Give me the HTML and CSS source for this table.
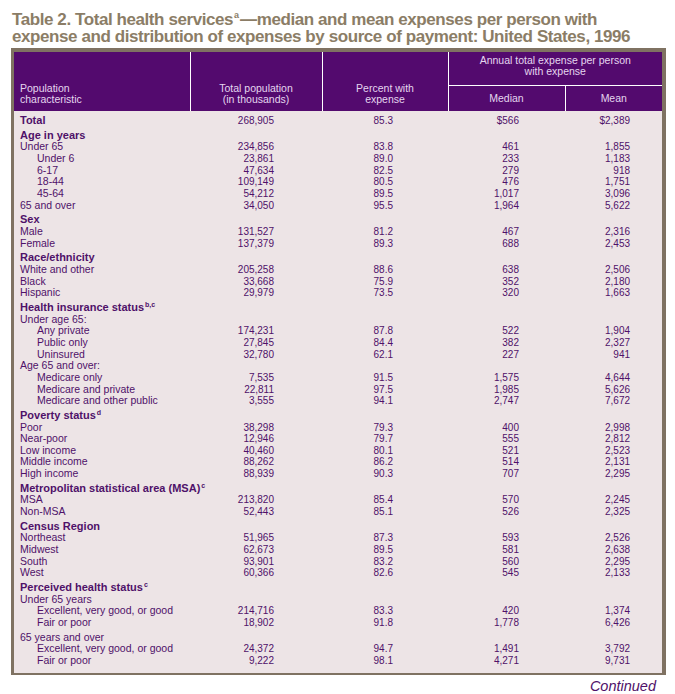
FILE: index.html
```html
<!DOCTYPE html>
<html lang="en">
<head>
<meta charset="utf-8">
<title>Table 2. Total health services</title>
<link rel="stylesheet" href="styles.css">
</head>
<body>
<div class="page">
  <h1 class="title">Table 2. Total health services<sup>a</sup>—median and mean expenses per person with<br>expense and distribution of expenses by source of payment: United States, 1996</h1>
  <div class="frame">
    <table class="data">
      <colgroup>
        <col class="c0"><col class="c1"><col class="c2"><col class="c3"><col class="c4">
      </colgroup>
      <thead>
        <tr class="h1">
          <th rowspan="2" class="hl">Population<br>characteristic</th>
          <th rowspan="2" class="hc">Total population<br>(in thousands)</th>
          <th rowspan="2" class="hc">Percent with<br>expense</th>
          <th colspan="2" class="hg">Annual total expense per person<br>with expense</th>
        </tr>
        <tr class="h2">
          <th class="hs">Median</th>
          <th class="hs">Mean</th>
        </tr>
      </thead>
      <tbody>
        <tr class="first"><td class="b">Total</td><td>268,905</td><td>85.3</td><td>$566</td><td>$2,389</td></tr>
        <tr class="sec"><td class="b">Age in years</td><td></td><td></td><td></td><td></td></tr>
        <tr><td>Under 65</td><td>234,856</td><td>83.8</td><td>461</td><td>1,855</td></tr>
        <tr><td class="i">Under 6</td><td>23,861</td><td>89.0</td><td>233</td><td>1,183</td></tr>
        <tr><td class="i">6-17</td><td>47,634</td><td>82.5</td><td>279</td><td>918</td></tr>
        <tr><td class="i">18-44</td><td>109,149</td><td>80.5</td><td>476</td><td>1,751</td></tr>
        <tr><td class="i">45-64</td><td>54,212</td><td>89.5</td><td>1,017</td><td>3,096</td></tr>
        <tr><td>65 and over</td><td>34,050</td><td>95.5</td><td>1,964</td><td>5,622</td></tr>
        <tr class="sec"><td class="b">Sex</td><td></td><td></td><td></td><td></td></tr>
        <tr><td>Male</td><td>131,527</td><td>81.2</td><td>467</td><td>2,316</td></tr>
        <tr><td>Female</td><td>137,379</td><td>89.3</td><td>688</td><td>2,453</td></tr>
        <tr class="sec"><td class="b">Race/ethnicity</td><td></td><td></td><td></td><td></td></tr>
        <tr><td>White and other</td><td>205,258</td><td>88.6</td><td>638</td><td>2,506</td></tr>
        <tr><td>Black</td><td>33,668</td><td>75.9</td><td>352</td><td>2,180</td></tr>
        <tr><td>Hispanic</td><td>29,979</td><td>73.5</td><td>320</td><td>1,663</td></tr>
        <tr class="sec"><td class="b">Health insurance status<sup>b,c</sup></td><td></td><td></td><td></td><td></td></tr>
        <tr><td>Under age 65:</td><td></td><td></td><td></td><td></td></tr>
        <tr><td class="i">Any private</td><td>174,231</td><td>87.8</td><td>522</td><td>1,904</td></tr>
        <tr><td class="i">Public only</td><td>27,845</td><td>84.4</td><td>382</td><td>2,327</td></tr>
        <tr><td class="i">Uninsured</td><td>32,780</td><td>62.1</td><td>227</td><td>941</td></tr>
        <tr><td>Age 65 and over:</td><td></td><td></td><td></td><td></td></tr>
        <tr><td class="i">Medicare only</td><td>7,535</td><td>91.5</td><td>1,575</td><td>4,644</td></tr>
        <tr><td class="i">Medicare and private</td><td>22,811</td><td>97.5</td><td>1,985</td><td>5,626</td></tr>
        <tr><td class="i">Medicare and other public</td><td>3,555</td><td>94.1</td><td>2,747</td><td>7,672</td></tr>
        <tr class="sec"><td class="b">Poverty status<sup>d</sup></td><td></td><td></td><td></td><td></td></tr>
        <tr><td>Poor</td><td>38,298</td><td>79.3</td><td>400</td><td>2,998</td></tr>
        <tr><td>Near-poor</td><td>12,946</td><td>79.7</td><td>555</td><td>2,812</td></tr>
        <tr><td>Low income</td><td>40,460</td><td>80.1</td><td>521</td><td>2,523</td></tr>
        <tr><td>Middle income</td><td>88,262</td><td>86.2</td><td>514</td><td>2,131</td></tr>
        <tr><td>High income</td><td>88,939</td><td>90.3</td><td>707</td><td>2,295</td></tr>
        <tr class="sec"><td class="b">Metropolitan statistical area (MSA)<sup>c</sup></td><td></td><td></td><td></td><td></td></tr>
        <tr><td>MSA</td><td>213,820</td><td>85.4</td><td>570</td><td>2,245</td></tr>
        <tr><td>Non-MSA</td><td>52,443</td><td>85.1</td><td>526</td><td>2,325</td></tr>
        <tr class="sec"><td class="b">Census Region</td><td></td><td></td><td></td><td></td></tr>
        <tr><td>Northeast</td><td>51,965</td><td>87.3</td><td>593</td><td>2,526</td></tr>
        <tr><td>Midwest</td><td>62,673</td><td>89.5</td><td>581</td><td>2,638</td></tr>
        <tr><td>South</td><td>93,901</td><td>83.2</td><td>560</td><td>2,295</td></tr>
        <tr><td>West</td><td>60,366</td><td>82.6</td><td>545</td><td>2,133</td></tr>
        <tr class="sec"><td class="b">Perceived health status<sup>c</sup></td><td></td><td></td><td></td><td></td></tr>
        <tr><td>Under 65 years</td><td></td><td></td><td></td><td></td></tr>
        <tr><td class="i">Excellent, very good, or good</td><td>214,716</td><td>83.3</td><td>420</td><td>1,374</td></tr>
        <tr><td class="i">Fair or poor</td><td>18,902</td><td>91.8</td><td>1,778</td><td>6,426</td></tr>
        <tr class="sec"><td>65 years and over</td><td></td><td></td><td></td><td></td></tr>
        <tr><td class="i">Excellent, very good, or good</td><td>24,372</td><td>94.7</td><td>1,491</td><td>3,792</td></tr>
        <tr class="last"><td class="i">Fair or poor</td><td>9,222</td><td>98.1</td><td>4,271</td><td>9,731</td></tr>
      </tbody>
    </table>
  </div>
  <div class="continued">Continued</div>
</div>
</body>
</html>
```

FILE: styles.css
```css
html, body {
  margin: 0;
  padding: 0;
  background: #ffffff;
}

.page {
  width: 675px;
  font-family: "Liberation Sans", Arial, sans-serif;
}

.title {
  margin: 10.5px 0 0 12px;
  font-size: 17px;
  line-height: 17.3px;
  font-weight: bold;
  letter-spacing: -0.42px;
  white-space: nowrap;
  color: #8b7d66;
}

.title sup {
  font-size: 9px;
  line-height: 0;
  vertical-align: 7px;
  letter-spacing: 0;
  margin: 0 1px 0 1px;
}

.frame {
  margin: 3px 0 0 11px;
  width: 648px;
  border-top: 4px solid #7f7262;
  border-left: 3px solid #7f7262;
  border-right: 4px solid #7f7262;
  border-bottom: 2px solid #7f7262;
  background: #ede4e6;
}

.data {
  width: 648px;
  table-layout: fixed;
  border-collapse: collapse;
  border-spacing: 0;
  color: #4f1169;
}

.c0 { width: 176px; }
.c1 { width: 132px; }
.c2 { width: 126px; }
.c3 { width: 117px; }
.c4 { width: 97px; }

thead th {
  background: #530a6e;
  color: #e4d6ee;
  font-weight: normal;
  font-size: 10.5px;
  line-height: 11px;
  padding: 0;
}

.h1 { height: 33px; }
.h2 { height: 26px; }

.hl {
  text-align: left;
  vertical-align: bottom;
  padding: 0 0 6px 6px;
}

.hc {
  text-align: center;
  vertical-align: bottom;
  padding-bottom: 6px;
  border-left: 1px solid #ffffff;
}

.hg {
  text-align: center;
  vertical-align: middle;
  padding-bottom: 4px;
  border-left: 1px solid #ffffff;
  border-bottom: 1px solid #ffffff;
}

.hs {
  text-align: center;
  vertical-align: middle;
  padding-top: 1px;
  border-left: 1px solid #ffffff;
}

tbody td {
  height: 11.65px;
  line-height: 11.65px;
  padding: 0;
  font-size: 10px;
  text-align: right;
  white-space: nowrap;
  vertical-align: middle;
}

tbody td:first-child {
  text-align: left;
  font-size: 10.5px;
  padding-left: 6px;
}

tbody td:nth-child(2) { padding-right: 48px; }
tbody td:nth-child(3) { padding-right: 55px; }
tbody td:nth-child(4) { padding-right: 46px; }
tbody td:nth-child(5) { padding-right: 32px; }

tbody td.i { padding-left: 23px; }

tbody td.b {
  font-weight: bold;
  font-size: 11px;
}

tbody td sup {
  font-size: 7px;
  line-height: 0;
  vertical-align: 4px;
  margin-left: 1px;
}

tr.first td { padding-top: 4px; }
tr.sec td { padding-top: 3px; }
tr.last td { padding-bottom: 6px; }

.continued {
  width: 656px;
  text-align: right;
  margin-top: 3px;
  font-style: italic;
  font-size: 14.5px;
  line-height: 17px;
  color: #4f1169;
}
```
